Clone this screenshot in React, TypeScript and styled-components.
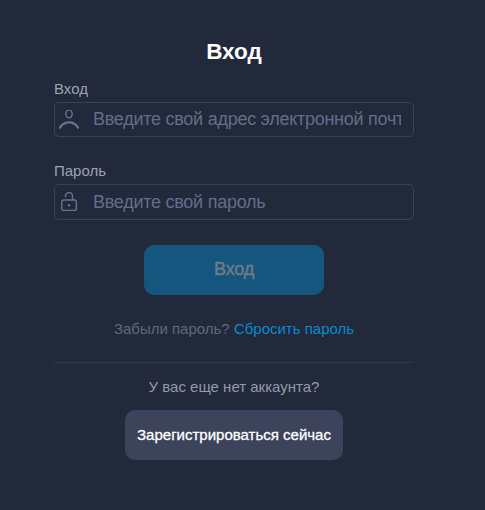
import React from "react";
import styled, { createGlobalStyle } from "styled-components";

const Global = createGlobalStyle`
  * { box-sizing: border-box; }
  body { margin: 0; background: #22293b; font-family: "Liberation Sans", Arial, sans-serif; }
`;
const Page = styled.main`
  width: 485px; height: 510px; padding: 38px 71px 0 54px; background: #22293b;
  display: flex; flex-direction: column; align-items: stretch;
`;
const Title = styled.h1`
  margin: 0; color: #fff; font-size: 22.5px; line-height: 28px; font-weight: 700; text-align: center;
`;
const Field = styled.label<{ $gap: number }>`
  display: flex; flex-direction: column; margin-top: ${(p) => p.$gap}px;
`;
const Label = styled.span`
  color: #9ba3b4; font-size: 15px; line-height: 18px; margin-bottom: 4px;
`;
const InputBox = styled.span<{ $height: number }>`
  display: flex; align-items: center; height: ${(p) => p.$height}px; border: 1px solid #35445a; border-radius: 5px; padding: 0 12px 0 4px;
`;
const Input = styled.input`
  flex: 1; min-width: 0; height: 32px; margin-left: 14px; padding: 0; border: 0; outline: 0; background: transparent;
  font: 18px "Liberation Sans", Arial, sans-serif; letter-spacing: -0.26px; color: #fff;
  &::placeholder { color: #626e88; opacity: 1; }
`;
const Submit = styled.button`
  align-self: center; width: 180px; height: 50px; margin-top: 25px; padding: 0 0 2px; border: 0; border-radius: 10px;
  background: #15567f; color: #6d7b88; font: 18px "Liberation Sans", Arial, sans-serif;
  letter-spacing: -0.2px; -webkit-text-stroke: 0.5px currentColor;
`;
const Forgot = styled.p`
  margin: 25px 0 0; font-size: 15px; line-height: 18px; color: #5f687e; text-align: center;
`;
const Link = styled.a` color: #078bd0; `;
const Divider = styled.hr` width: 100%; height: 1px; margin: 24px 0 0; border: 0; background: #30374d; `;
const Question = styled.p`
  margin: 15px 0 0; font-size: 15px; line-height: 18px; color: #929aac; text-align: center;
`;
const Register = styled.button`
  align-self: center; width: 218px; height: 50px; margin-top: 14px; padding: 0 0 2px; border: 0; border-radius: 10px;
  background: #3c435a; color: #fff; font: 15px "Liberation Sans", Arial, sans-serif; white-space: nowrap;
  -webkit-text-stroke: 0.3px currentColor;
`;
const Icon = styled.svg`
  width: 20px; height: 20px; flex: none; fill: none; stroke: #68738e; stroke-width: 1.4; stroke-linecap: round;
`;

export default function App() {
  return (
    <Page>
      <Global />
      <Title>Вход</Title>
      <Field $gap={14}>
        <Label>Вход</Label>
        <InputBox $height={35}>
          <Icon viewBox="0 0 20 20"><ellipse cx="10" cy="4" rx="3.2" ry="3.9" /><path d="M1 17.6C5.3 10.7 14.7 10.7 19 17.6" strokeWidth="2.2" /></Icon>
          <Input placeholder="Введите свой адрес электронной почты" />
        </InputBox>
      </Field>
      <Field $gap={25}>
        <Label>Пароль</Label>
        <InputBox $height={36}>
          <Icon viewBox="0 0 20 20"><rect x="2.8" y="8" width="14.6" height="10.4" rx="2" /><path d="M13.5 8V4a3.5 3.5 0 0 0-7 0v.8" /><circle cx="10" cy="13.2" r="1.2" fill="#68738e" stroke="none" /></Icon>
          <Input type="password" placeholder="Введите свой пароль" />
        </InputBox>
      </Field>
      <Submit disabled>Вход</Submit>
      <Forgot>Забыли пароль? <Link>Сбросить пароль</Link></Forgot>
      <Divider />
      <Question>У вас еще нет аккаунта?</Question>
      <Register>Зарегистрироваться сейчас</Register>
    </Page>
  );
}
